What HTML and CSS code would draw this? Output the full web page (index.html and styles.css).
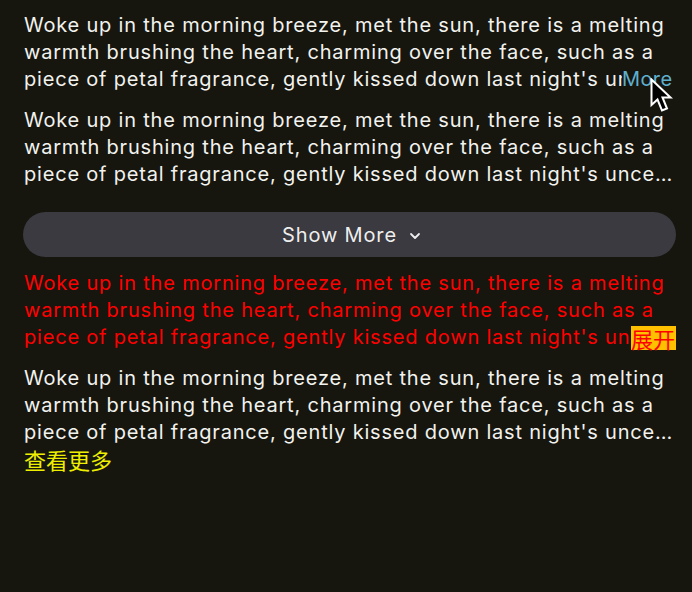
FILE: index.html
```html
<!DOCTYPE html>
<html>
<head>
<meta charset="utf-8">
<link rel="stylesheet" href="styles.css">
</head>
<body>
<div class="page">
  <div class="block first">
    <p class="text">Woke up in the morning breeze, met the sun, there is a melting warmth brushing the heart, charming over the face, such as a piece of petal fragrance, gently kissed down last night's unce…</p>
    <span class="more">More</span>
    <svg class="cursor" width="24" height="36" viewBox="0 0 24 36"><path d="M1.5 1.5 L1.5 27 L7.5 21.5 L12 32.5 L17 30.5 L12.5 19.5 L20.5 19.5 Z" fill="#000" stroke="#fff" stroke-width="2" stroke-linejoin="miter"/></svg>
  </div>
  <div class="block">
    <p class="text">Woke up in the morning breeze, met the sun, there is a melting warmth brushing the heart, charming over the face, such as a piece of petal fragrance, gently kissed down last night's unce…</p>
  </div>
  <button class="show-more">Show More <svg class="chev" width="12" height="8" viewBox="0 0 12 8"><polyline points="2,2 6,6 10,2" fill="none" stroke="#eeeeee" stroke-width="1.8" stroke-linecap="round" stroke-linejoin="round"/></svg></button>
  <div class="block">
    <p class="text red">Woke up in the morning breeze, met the sun, there is a melting warmth brushing the heart, charming over the face, such as a piece of petal fragrance, gently kissed down last night's unce…</p>
    <span class="expand">展开</span>
  </div>
  <div class="block">
    <p class="text">Woke up in the morning breeze, met the sun, there is a melting warmth brushing the heart, charming over the face, such as a piece of petal fragrance, gently kissed down last night's unce…</p>
    <div class="view-more">查看更多</div>
  </div>
</div>
</body>
</html>
```
FILE: styles.css
```css
html, body {
  margin: 0;
  padding: 0;
  background: #16160f;
  height: 100%;
}
.page {
  padding: 12px 16px 0 24px;
  display: flex;
  flex-direction: column;
  font-family: Inter, "Noto Sans CJK SC", sans-serif;
  font-size: 20px;
  letter-spacing: 0.8px;
  line-height: 27px;
  color: #f2f2ee;
}
.block {
  position: relative;
  margin-bottom: 14px;
}
.text {
  margin: 0;
  max-height: 81px;
  overflow: hidden;
}
.red {
  color: #ff0000;
}
.more {
  position: absolute;
  right: 0;
  bottom: 0;
  color: #5fb0cf;
  background: #16160f;
  width: 54px;
  text-align: left;
  letter-spacing: 0.4px;
}
.cursor {
  position: absolute;
  left: 626px;
  top: 66px;
}
.show-more {
  margin: 10px 0 13px -1px;
  height: 45px;
  border: none;
  border-radius: 23px;
  background: #3a3a40;
  color: #eeeeee;
  font-family: Inter, sans-serif;
  font-size: 20px;
  letter-spacing: 0.85px;
  display: flex;
  align-items: center;
  justify-content: center;
  gap: 12px;
  padding: 0 0 0 4px;
}
.chev {
  margin-top: 2px;
}
.expand {
  position: absolute;
  right: 0;
  bottom: 1px;
  background: #ffc000;
  color: #ff0000;
  font-family: "Noto Sans CJK SC", sans-serif;
  font-size: 22px;
  letter-spacing: 0;
  line-height: 24px;
  width: 45px;
}
.view-more {
  color: #eeee00;
  font-family: "Noto Sans CJK SC", sans-serif;
  font-size: 22px;
  letter-spacing: 0;
}
```
